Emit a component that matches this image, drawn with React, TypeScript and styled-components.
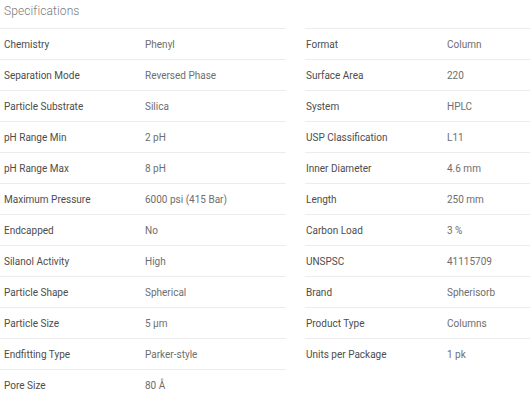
import React from "react";
import styled, { createGlobalStyle } from "styled-components";

const Global = createGlobalStyle`
  html, body { margin: 0; padding: 0; background: #ffffff; }
  body { font-family: Roboto, "Noto Sans", Arial, sans-serif; overflow: hidden; }
`;

const Page = styled.div`
  width: 591px;
`;

const Title = styled.h2`
  margin: 0;
  height: 28px;
  padding: 2px 0 0 4px;
  box-sizing: border-box;
  font-size: 12px;
  font-weight: 300;
  color: #7a7a7a;
  line-height: 18px;
  letter-spacing: 0.1px;
`;

const Columns = styled.div`
  display: grid;
  grid-template-columns: 286px 286px;
  column-gap: 19px;
  align-items: start;
`;

const Column = styled.div`
  display: flex;
  flex-direction: column;
`;

const Row = styled.div<{ $inset: number }>`
  display: grid;
  grid-template-columns: 141px 1fr;
  align-items: center;
  height: 31px;
  box-sizing: border-box;
  border-top: 1px solid #ececec;
  padding-left: ${(p) => p.$inset}px;
  font-size: 10px;
`;

const Label = styled.span`
  color: #4d4d4d;
`;

const Value = styled.span`
  color: #6e6e6e;
`;

const left: [string, string][] = [
  ["Chemistry", "Phenyl"],
  ["Separation Mode", "Reversed Phase"],
  ["Particle Substrate", "Silica"],
  ["pH Range Min", "2 pH"],
  ["pH Range Max", "8 pH"],
  ["Maximum Pressure", "6000 psi (415 Bar)"],
  ["Endcapped", "No"],
  ["Silanol Activity", "High"],
  ["Particle Shape", "Spherical"],
  ["Particle Size", "5 µm"],
  ["Endfitting Type", "Parker-style"],
  ["Pore Size", "80 Å"],
];

const right: [string, string][] = [
  ["Format", "Column"],
  ["Surface Area", "220"],
  ["System", "HPLC"],
  ["USP Classification", "L11"],
  ["Inner Diameter", "4.6 mm"],
  ["Length", "250 mm"],
  ["Carbon Load", "3 %"],
  ["UNSPSC", "41115709"],
  ["Brand", "Spherisorb"],
  ["Product Type", "Columns"],
  ["Units per Package", "1 pk"],
];

const SpecColumn = ({ rows, inset }: { rows: [string, string][]; inset: number }) => (
  <Column>
    {rows.map(([k, v]) => (
      <Row key={k} $inset={inset}>
        <Label>{k}</Label>
        <Value>{v}</Value>
      </Row>
    ))}
  </Column>
);

export default function App() {
  return (
    <Page>
      <Global />
      <Title>Specifications</Title>
      <Columns>
        <SpecColumn rows={left} inset={4} />
        <SpecColumn rows={right} inset={1} />
      </Columns>
    </Page>
  );
}
